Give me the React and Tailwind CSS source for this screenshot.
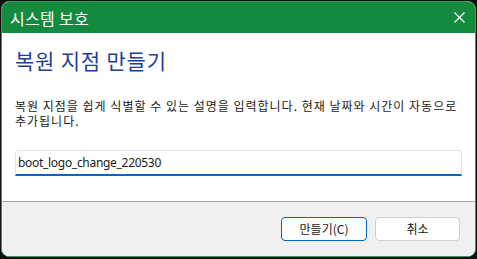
import React from 'react';

const font = { fontFamily: '"Noto Sans CJK KR", "Noto Sans", sans-serif' };

export default function App() {
  return (
    <div className="w-[477px] h-[259px] bg-[#111] pl-[1px] pt-[1px]" style={font}>
      <div className="w-[475px] h-[256px] flex flex-col rounded-[8px] border border-[#3a9a60] overflow-hidden bg-white">
        {/* Title bar */}
        <div className="h-[31px] bg-[#148a3f] flex items-center justify-between pl-[8px] pr-[9px] shrink-0">
          <span className="text-white text-[16px] leading-none tracking-[0.3px]">시스템 보호</span>
          <svg width="11" height="11" viewBox="0 0 11 11" className="mr-[1px]">
            <path d="M0.5 0.5 L10.5 10.5 M10.5 0.5 L0.5 10.5" stroke="white" strokeWidth="1.1" />
          </svg>
        </div>

        {/* Body */}
        <div className="flex-1 px-[13px] pt-[13px]">
          <h1 className="text-[21px] leading-[28px] tracking-[0.8px] text-[#1d3f94]">복원 지점 만들기</h1>
          <p className="mt-[24px] text-[12px] leading-[15px] tracking-[1px] text-[#1a1a1a] w-[450px]">
            복원 지점을 쉽게 식별할 수 있는 설명을 입력합니다. 현재 날짜와 시간이 자동으로 추가됩니다.
          </p>
          <div
            className="mt-[22px] h-[26px] w-[447px] border border-[#e5e5e5] border-b-2 border-b-[#0067c0] rounded-t-[3px] flex items-center pl-[2px] text-[12px] tracking-[-0.3px] text-[#1a1a1a]"
            style={{ fontFamily: '"Noto Sans", sans-serif' }}
          >
            boot_logo_change_220530
          </div>
        </div>

        {/* Footer */}
        <div className="h-[55px] shrink-0 bg-[#f0f0f0] border-t border-[#a8a8a8] flex items-center justify-end gap-[8px] pr-[15px]">
          <button className="w-[86px] h-[24px] rounded-[4px] border border-[#0067c0] bg-[#fdfdfd] text-[12px] text-[#1a1a1a]">
            만들기(C)
          </button>
          <button className="w-[85px] h-[24px] rounded-[4px] border border-[#d0d0d0] bg-[#fdfdfd] text-[12px] text-[#1a1a1a]">
            취소
          </button>
        </div>
      </div>
    </div>
  );
}
